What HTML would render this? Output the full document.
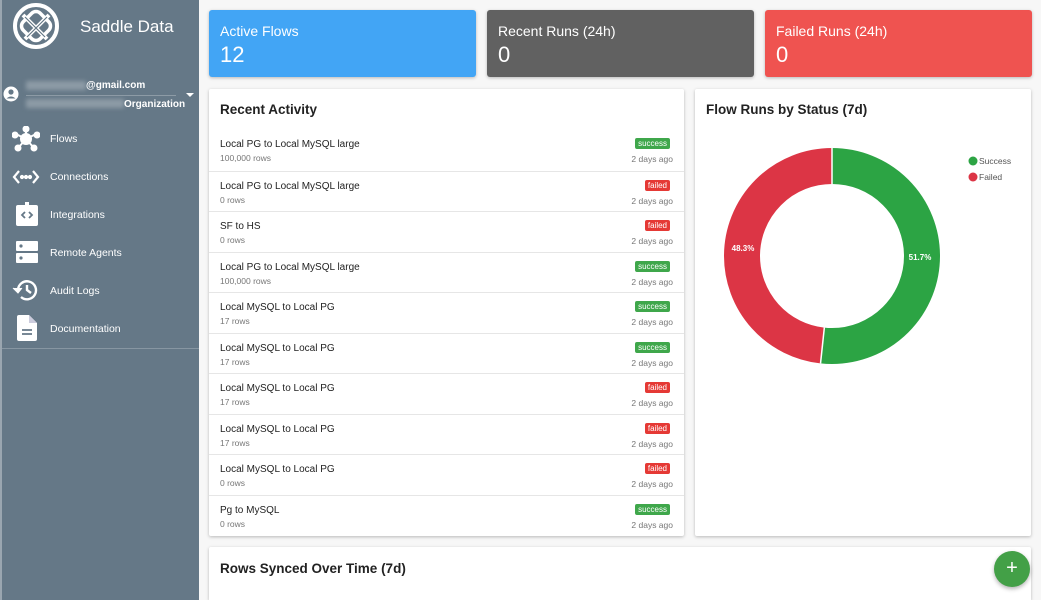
<!DOCTYPE html>
<html><head><meta charset="utf-8"><style>
*{box-sizing:border-box;margin:0;padding:0}
html,body{width:1041px;height:600px;overflow:hidden}
body{background:#f7f7f7;font-family:"Liberation Sans",sans-serif;position:relative}
.sb{position:absolute;left:0;top:0;width:199px;height:600px;background:#657887;border-left:2px solid #9aa6b0;color:#fff}
.brand{position:absolute;left:78px;top:17px;font-size:17px}
.acct{position:absolute;font-size:10px;font-weight:bold}
.nav{position:absolute;left:48px;font-size:10.5px}
.ic{position:absolute;left:10px}
.card{position:absolute;background:#fff;box-shadow:0 1px 3px rgba(0,0,0,.25);border-radius:2px}
.stat{position:absolute;top:10px;height:67px;color:#fff;border-radius:3px;box-shadow:0 1px 3px rgba(0,0,0,.25)}
.stat .t{position:absolute;left:11px;top:13px;font-size:14px}
.stat .v{position:absolute;left:11px;top:32px;font-size:22px}
h3{position:absolute;font-size:13.5px;font-weight:bold;color:#222}
.row{position:absolute;left:0;width:475px;height:40.6px;border-top:1px solid #e6e6e6}
.row .n{position:absolute;left:11px;top:9px;font-size:10px;color:#222}
.row .r{position:absolute;left:11px;top:23px;font-size:8.5px;color:#777}
.row .b{position:absolute;right:14px;top:8px;font-size:8px;color:#fff;padding:1px 3px;border-radius:2px}
.row .d{position:absolute;right:11px;top:24px;font-size:8.5px;color:#777}
.s{background:#3fa74b}.f{background:#e53935}
</style></head><body>
<div class="sb">
<svg style="position:absolute;left:9px;top:1px" width="50" height="50" viewBox="0 0 50 50" fill="none" stroke="#fff" stroke-width="4"><circle cx="25" cy="25" r="21"/><rect x="13" y="13" width="24" height="24" rx="6" transform="rotate(45 25 25)" stroke-width="3.5"/><path d="M12 14 L36 38 M14 38 L38 14" stroke-width="4"/><path d="M14 16 L34 36 M16 36 L36 16" stroke="#657887" stroke-width="1.2"/></svg>
<div class="brand">Saddle Data</div>
<svg style="position:absolute;left:1px;top:86px" width="16" height="16" viewBox="0 0 16 16"><circle cx="8" cy="8" r="7.5" fill="#fff"/><circle cx="8" cy="6" r="2.6" fill="#657887"/><path d="M3.5 12.5 Q8 8.5 12.5 12.5" fill="#657887"/></svg>
<div style="position:absolute;left:24px;top:81px;width:60px;height:9px;background:#8d9ba6;filter:blur(2px)"></div>
<div class="acct" style="left:84px;top:80px">@gmail.com</div>
<div style="position:absolute;left:24px;top:95px;width:150px;border-top:1px solid #8d9ba6"></div>
<div style="position:absolute;left:24px;top:99px;width:98px;height:9px;background:#8d9ba6;filter:blur(2px)"></div>
<div class="acct" style="left:122px;top:99px">Organization</div>
<div style="position:absolute;left:184px;top:93px;border:4px solid transparent;border-top:4px solid #fff"></div>
<svg class="ic" style="top:126px" width="28" height="26" viewBox="0 0 28 26" fill="#fff" stroke="#fff" stroke-width="2"><path d="M14 13 L14 3 M14 13 L4 8 M14 13 L24 8 M14 13 L6 22 M14 13 L22 22"/><circle cx="14" cy="13" r="5"/><circle cx="14" cy="3" r="2.5"/><circle cx="3" cy="9" r="2.5"/><circle cx="25" cy="9" r="2.5"/><circle cx="6" cy="22" r="2.5"/><circle cx="22" cy="22" r="2.5"/></svg>
<div class="nav" style="top:133px">Flows</div>
<svg class="ic" style="top:168px" width="28" height="18" viewBox="0 0 28 18" fill="none" stroke="#fff" stroke-width="2.2"><path d="M7 3 L2 9 L7 15 M21 3 L26 9 L21 15"/><circle cx="10" cy="9" r="1" fill="#fff"/><circle cx="14" cy="9" r="1" fill="#fff"/><circle cx="18" cy="9" r="1" fill="#fff"/></svg>
<div class="nav" style="top:171px">Connections</div>
<svg class="ic" style="top:201px;left:13px" width="24" height="26" viewBox="0 0 24 26"><rect x="1" y="4" width="22" height="21" rx="2" fill="#fff"/><rect x="10" y="1" width="4" height="5" fill="#fff"/><path d="M10 11 L7 14 L10 17 M14 11 L17 14 L14 17" stroke="#657887" stroke-width="1.8" fill="none"/></svg>
<div class="nav" style="top:209px">Integrations</div>
<svg class="ic" style="top:241px;left:13px" width="24" height="24" viewBox="0 0 24 24"><rect x="1" y="0" width="22" height="10" rx="1" fill="#fff"/><rect x="1" y="12" width="22" height="10" rx="1" fill="#fff"/><circle cx="6" cy="5" r="1.6" fill="#657887"/><circle cx="6" cy="17" r="1.6" fill="#657887"/></svg>
<div class="nav" style="top:247px">Remote Agents</div>
<svg class="ic" style="top:278px" width="28" height="24" viewBox="0 0 28 24" fill="none" stroke="#fff" stroke-width="2.4"><path d="M6 12 A9 9 0 1 1 9 19"/><path d="M1 10 L6 15 L10 10" fill="#fff" stroke-width="1"/><path d="M15 7 L15 12 L19 15"/></svg>
<div class="nav" style="top:285px">Audit Logs</div>
<svg class="ic" style="top:315px;left:15px" width="20" height="26" viewBox="0 0 20 26"><path d="M2 0 H12 L20 8 V24 Q20 26 18 26 H2 Q0 26 0 24 V2 Q0 0 2 0Z" fill="#fff"/><path d="M12 0 V8 H20" fill="#ccd" /><path d="M5 15 H15 M5 19 H15" stroke="#657887" stroke-width="1.8"/></svg>
<div class="nav" style="top:323px">Documentation</div>
<div style="position:absolute;left:0;top:348px;width:197px;border-top:1px solid #8796a2"></div>
</div>

<div class="stat" style="left:209px;width:267px;background:#42a5f5"><div class="t">Active Flows</div><div class="v">12</div></div>
<div class="stat" style="left:487px;width:267px;background:#616161"><div class="t">Recent Runs (24h)</div><div class="v">0</div></div>
<div class="stat" style="left:765px;width:267px;background:#ef5350"><div class="t">Failed Runs (24h)</div><div class="v">0</div></div>

<div class="card" style="left:209px;top:89px;width:475px;height:447px">
<h3 style="left:11px;top:13px">Recent Activity</h3>
<div class="row" style="top:41px;border-top:none"><div class="n">Local PG to Local MySQL large</div><div class="r">100,000 rows</div><div class="b s">success</div><div class="d">2 days ago</div></div>
<div class="row" style="top:81.5px"><div class="n">Local PG to Local MySQL large</div><div class="r">0 rows</div><div class="b f">failed</div><div class="d">2 days ago</div></div>
<div class="row" style="top:122px"><div class="n">SF to HS</div><div class="r">0 rows</div><div class="b f">failed</div><div class="d">2 days ago</div></div>
<div class="row" style="top:162.5px"><div class="n">Local PG to Local MySQL large</div><div class="r">100,000 rows</div><div class="b s">success</div><div class="d">2 days ago</div></div>
<div class="row" style="top:203px"><div class="n">Local MySQL to Local PG</div><div class="r">17 rows</div><div class="b s">success</div><div class="d">2 days ago</div></div>
<div class="row" style="top:243.5px"><div class="n">Local MySQL to Local PG</div><div class="r">17 rows</div><div class="b s">success</div><div class="d">2 days ago</div></div>
<div class="row" style="top:284px"><div class="n">Local MySQL to Local PG</div><div class="r">17 rows</div><div class="b f">failed</div><div class="d">2 days ago</div></div>
<div class="row" style="top:324.5px"><div class="n">Local MySQL to Local PG</div><div class="r">17 rows</div><div class="b f">failed</div><div class="d">2 days ago</div></div>
<div class="row" style="top:365px"><div class="n">Local MySQL to Local PG</div><div class="r">0 rows</div><div class="b f">failed</div><div class="d">2 days ago</div></div>
<div class="row" style="top:405.5px"><div class="n">Pg to MySQL</div><div class="r">0 rows</div><div class="b s">success</div><div class="d">2 days ago</div></div>
</div>

<div class="card" style="left:695px;top:89px;width:336px;height:447px">
<h3 style="left:11px;top:13px">Flow Runs by Status (7d)</h3>
<svg style="position:absolute;left:0;top:0" width="336" height="447">
<g transform="translate(137,167) rotate(-90)">
<circle r="90" fill="none" stroke="#2ca444" stroke-width="36" stroke-dasharray="292.4 565.5"/>
<circle r="90" fill="none" stroke="#dc3545" stroke-width="36" stroke-dasharray="273.1 565.5" stroke-dashoffset="-292.4"/>
<line x1="72" y1="0" x2="108" y2="0" stroke="#fff" stroke-width="1.5"/>
<line x1="72" y1="0" x2="108" y2="0" stroke="#fff" stroke-width="1.5" transform="rotate(186.1)"/>
</g>
<text x="225" y="171" font-size="8" font-weight="bold" fill="#fff" text-anchor="middle" font-family="Liberation Sans">51.7%</text>
<text x="48" y="162" font-size="8" font-weight="bold" fill="#fff" text-anchor="middle" font-family="Liberation Sans">48.3%</text>
<circle cx="278" cy="72" r="4.5" fill="#2ca444"/><text x="284" y="75" font-size="8.5" fill="#555" font-family="Liberation Sans">Success</text>
<circle cx="278" cy="88" r="4.5" fill="#dc3545"/><text x="284" y="91" font-size="8.5" fill="#555" font-family="Liberation Sans">Failed</text>
</svg>
</div>

<div class="card" style="left:209px;top:547px;width:822px;height:53px;border-radius:2px 2px 0 0">
<h3 style="left:11px;top:14px">Rows Synced Over Time (7d)</h3>
</div>
<div style="position:absolute;left:994px;top:551px;width:36px;height:36px;border-radius:50%;background:#43a047;box-shadow:0 2px 4px rgba(0,0,0,.3);color:#fff;font-size:20px;text-align:center;line-height:35px">+</div>
</body></html>
